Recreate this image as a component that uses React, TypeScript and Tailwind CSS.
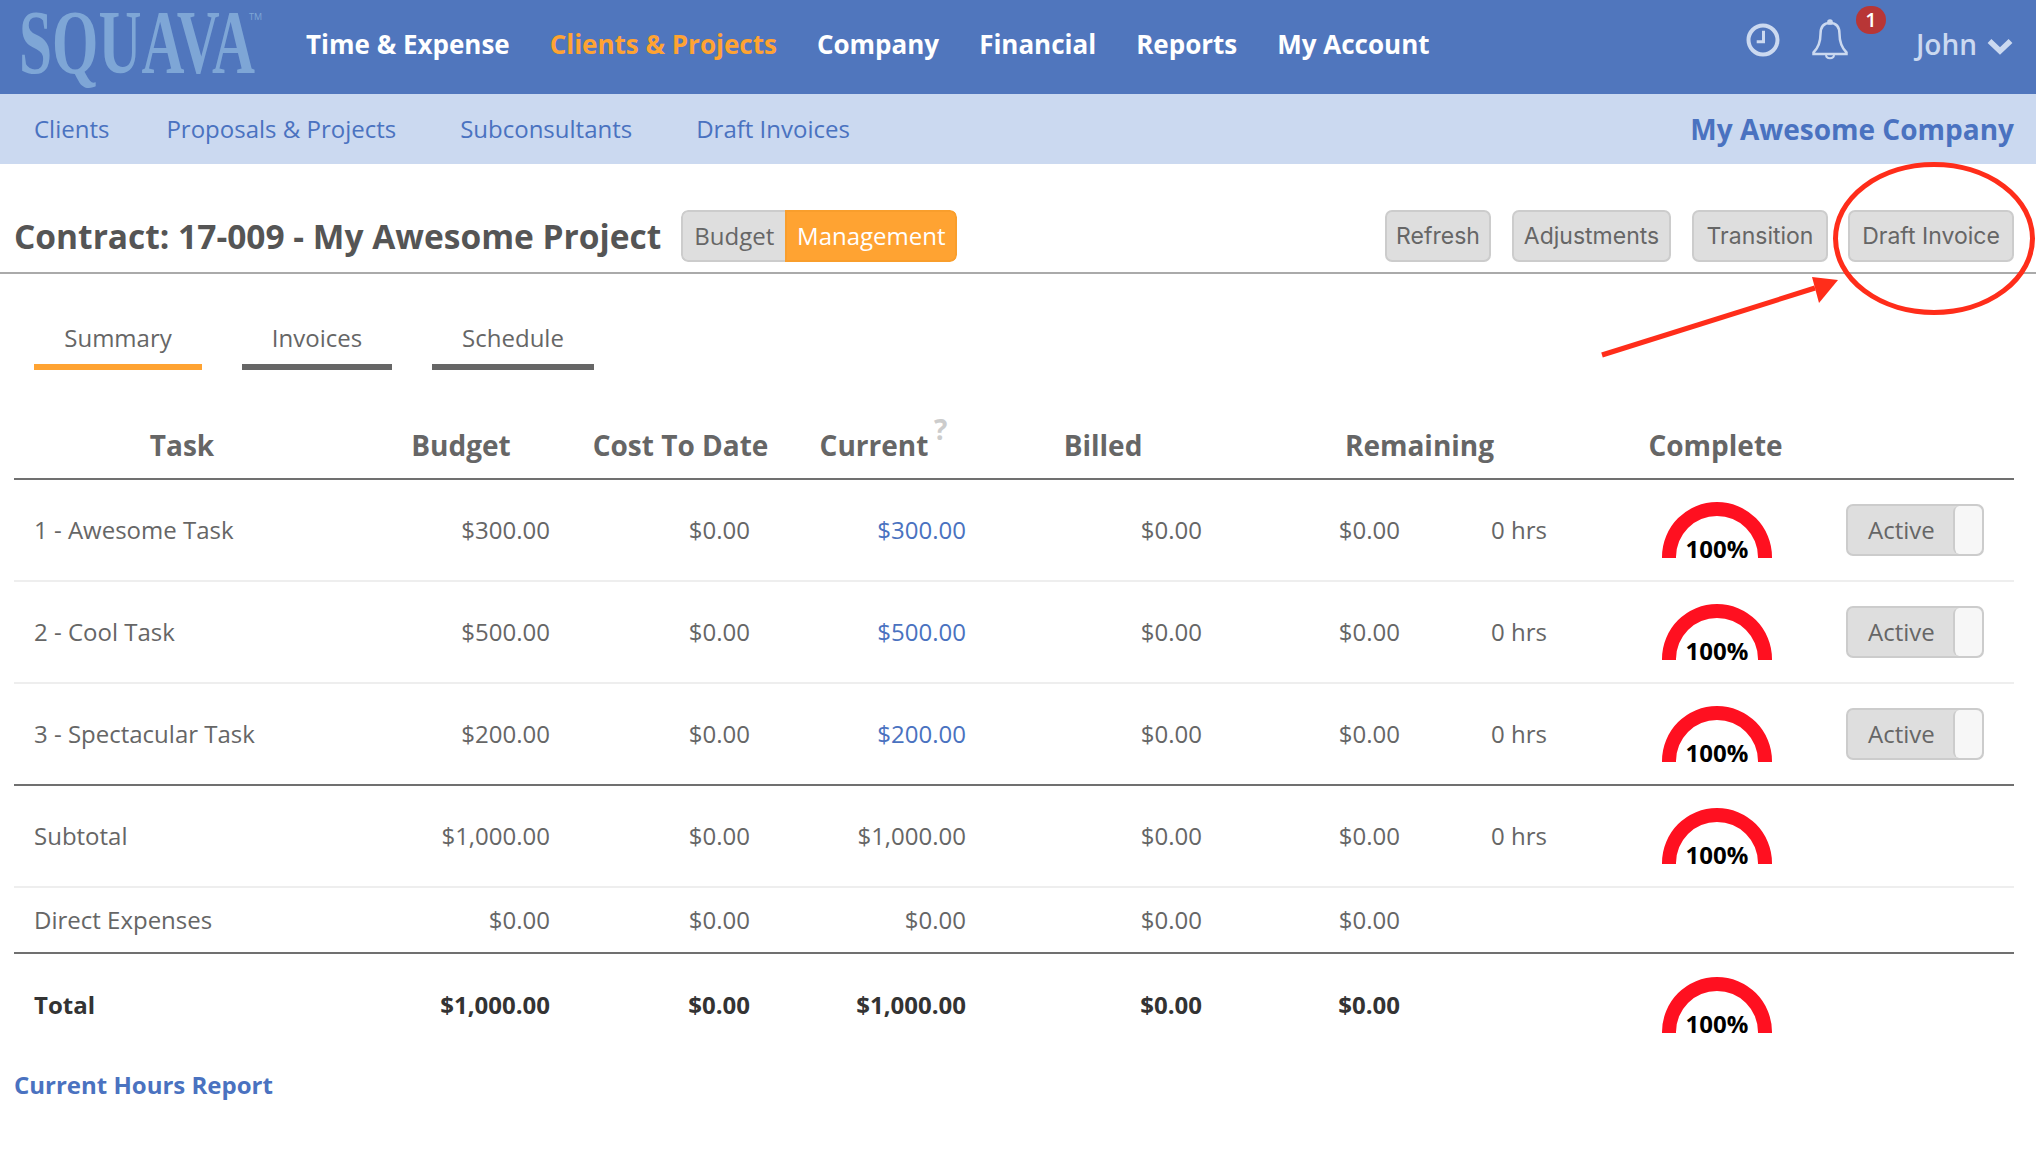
const cols = "grid grid-cols-[336px_200px_200px_216px_236px_198px_147px_55px_230px_182px]";

function Gauge() {
  return (
    <div className="relative w-[110px] h-[56px]">
      <svg width="110" height="56" viewBox="0 0 110 56" className="block">
        <path d="M0 56V55A55 55 0 0 1 110 55V56H96V55A41 41 0 0 0 14 55V56Z" fill="#ff1020" />
      </svg>
      <div className="absolute left-0 right-0 top-[31px] text-center text-[24px] leading-[32px] font-bold text-black">100%</div>
    </div>
  );
}

function Toggle() {
  return (
    <div className="flex h-[52px] w-[138px] rounded-[7px] border-2 border-[#cccccc] bg-[#dedede]">
      <div className="flex-1 pl-[20px] text-[24px] leading-[48px] text-[#666666]">Active</div>
      <div className="w-[29px] rounded-[6px] border-l-2 border-[#cccccc] bg-[#f7f7f7]" />
    </div>
  );
}

type RowProps = {
  name: string; budget: string; cost: string; current: string; billed: string; remaining: string;
  hrs?: string; gauge?: boolean; toggle?: boolean; link?: boolean; h: string; line: string; bold?: boolean;
};

function Row({ name, budget, cost, current, billed, remaining, hrs, gauge, toggle, link, h, line, bold }: RowProps) {
  const cell = "flex items-center justify-end";
  return (
    <div className={`${cols} ${h} ${line} items-stretch ${bold ? "font-bold text-[#333333]" : "font-normal text-[#666666]"} text-[24px]`}>
      <div className="flex items-center pl-[20px]">{name}</div>
      <div className={cell}>{budget}</div>
      <div className={cell}>{cost}</div>
      <div className={`${cell} ${link ? "text-[#4a72c0]" : ""}`}>{current}</div>
      <div className={cell}>{billed}</div>
      <div className={cell}>{remaining}</div>
      <div className={cell}>{hrs}</div>
      <div />
      <div className="flex items-center justify-center">{gauge ? <Gauge /> : null}</div>
      <div className="flex items-center pl-[14px]">{toggle ? <Toggle /> : null}</div>
    </div>
  );
}

function Btn({ children, w, ml }: { children: string; w: string; ml: string }) {
  return (
    <div className={`${w} ${ml} h-[52px] rounded-[7px] border-2 border-[#cccccc] bg-[#dedede] text-center font-['Inter',sans-serif] text-[23px] leading-[48px] font-normal text-[#666666]`}>
      {children}
    </div>
  );
}

function Tab({ label, w, ml, active }: { label: string; w: string; ml: string; active?: boolean }) {
  return (
    <div className={`${w} ${ml} h-[59px] border-b-[6px] ${active ? "border-[#ffa332]" : "border-[#666666]"} text-center text-[24px] leading-[54px] text-[#666666]`}>
      {label}
    </div>
  );
}

export default function App() {
  return (
    <div className="relative w-[2036px] h-[1154px] overflow-hidden bg-white font-['Open_Sans',sans-serif]">
      <header className="flex h-[94px] items-center bg-[#5076bd]">
        <svg width="287" height="94" viewBox="0 0 287 94" className="ml-0 shrink-0">
          <text x="19" y="73" textLength="236" lengthAdjust="spacingAndGlyphs" fontFamily="'Liberation Serif', serif" fontWeight="700" fontSize="90" fill="#7ea6d6">SQUAVA</text>
          <text x="249" y="20" fontFamily="'Open Sans', sans-serif" fontSize="9" fill="#7ea6d6">TM</text>
        </svg>
        <svg width="19" height="1" className="shrink-0" />
        <nav className="flex pb-[6px] text-[26px] font-bold text-white">
          <span>Time &amp; Expense</span>
          <span className="ml-[40px] text-[#ffa332]">Clients &amp; Projects</span>
          <span className="ml-[40px]">Company</span>
          <span className="ml-[40px]">Financial</span>
          <span className="ml-[40px]">Reports</span>
          <span className="ml-[40px]">My Account</span>
        </nav>
        <div className="ml-auto flex items-center text-[#cbd9f0]">
          <svg width="34" height="34" viewBox="0 0 34 34" fill="none" stroke="#cbd9f0" className="mb-[14px]">
            <circle cx="17" cy="17" r="14.5" strokeWidth="4" />
            <path d="M17.5 7.7V18.7H10.7" strokeWidth="3" />
          </svg>
          <div className="relative ml-[31px] mr-[67px] mb-[14px]">
            <svg width="38" height="42" viewBox="0 0 38 42" fill="none" stroke="#cbd9f0" strokeWidth="2.5" className="block">
              <path d="M19 4C12 4 9.5 9 9.5 15C9.5 24 7 29 2.5 33.5V35H35.5V33.5C31 29 28.5 24 28.5 15C28.5 9 26 4 19 4Z" />
              <circle cx="19" cy="3" r="1.6" fill="#cbd9f0" />
              <path d="M15 35.5C15 40.5 23 40.5 23 35.5" strokeWidth="2" />
            </svg>
            <div className="absolute left-[45px] top-[-13px] flex h-[28px] w-[30px] items-center justify-center rounded-full bg-[#b83636] text-[20px] font-semibold text-white">1</div>
          </div>
          <span className="mb-[6px] text-[28px] font-semibold">John</span>
          <svg width="26" height="20" viewBox="0 0 26 20" fill="none" stroke="#cbd9f0" strokeWidth="5.5" className="mb-[2px] ml-[10px] mr-[23px]">
            <path d="M2.5 5L13 15L23.5 5" />
          </svg>
        </div>
      </header>

      <div className="flex h-[70px] items-center bg-[#cbd9f0] text-[24px] text-[#4a72c0]">
        <span className="ml-[34px]">Clients</span>
        <span className="ml-[57px]">Proposals &amp; Projects</span>
        <span className="ml-[64px]">Subconsultants</span>
        <span className="ml-[64px]">Draft Invoices</span>
        <span className="ml-auto mr-[22px] text-[28px] font-bold">My Awesome Company</span>
      </div>

      <div className="flex h-[110px] items-center border-b-2 border-[#aaaaaa] pt-[36px] pl-[14px]">
        <h1 className="shrink-0 text-[33.5px] font-bold text-[#555555]">Contract: 17-009 - My Awesome Project</h1>
        <div className="ml-[20px] flex h-[52px] overflow-hidden rounded-[7px] text-[24px]">
          <div className="w-[104px] rounded-l-[7px] border-2 border-r-0 border-[#cccccc] bg-[#dedede] text-center leading-[48px] text-[#666666]">Budget</div>
          <div className="w-[172px] rounded-r-[7px] border-2 border-[#f99e2c] bg-[#ffa332] text-center leading-[48px] text-white">Management</div>
        </div>
        <div className="ml-auto flex pr-[22px]">
          <Btn w="w-[106px]" ml="ml-0">Refresh</Btn>
          <Btn w="w-[159px]" ml="ml-[21px]">Adjustments</Btn>
          <Btn w="w-[136px]" ml="ml-[21px]">Transition</Btn>
          <Btn w="w-[166px]" ml="ml-[20px]">Draft Invoice</Btn>
        </div>
      </div>

      <div className="flex pt-[37px] pl-[34px]">
        <Tab label="Summary" w="w-[168px]" ml="ml-0" active />
        <Tab label="Invoices" w="w-[150px]" ml="ml-[40px]" />
        <Tab label="Schedule" w="w-[162px]" ml="ml-[40px]" />
      </div>

      <div className="ml-[14px] w-[2000px] mt-[39px]">
        <div className="flex h-[71px] border-b-2 border-[#707070] text-[28px] font-bold leading-[72px] text-[#666666] items-start">
          <div className="w-[336px] text-center">Task</div>
          <div className="w-[222px] text-center">Budget</div>
          <div className="w-[217px] text-center">Cost To Date</div>
          <div className="relative w-[170px] text-center">
            Current
            <span className="absolute left-[145px] top-[6px] text-[28px] leading-[28px] font-bold text-[#cccccc]">?</span>
          </div>
          <div className="w-[288px] text-center">Billed</div>
          <div className="w-[345px] text-center">Remaining</div>
          <div className="w-[247px] text-center">Complete</div>
        </div>
        <Row name="1 - Awesome Task" budget="$300.00" cost="$0.00" current="$300.00" billed="$0.00" remaining="$0.00" hrs="0 hrs" gauge toggle link h="h-[102px]" line="border-b-2 border-[#eeeeee]" />
        <Row name="2 - Cool Task" budget="$500.00" cost="$0.00" current="$500.00" billed="$0.00" remaining="$0.00" hrs="0 hrs" gauge toggle link h="h-[102px]" line="border-b-2 border-[#eeeeee]" />
        <Row name="3 - Spectacular Task" budget="$200.00" cost="$0.00" current="$200.00" billed="$0.00" remaining="$0.00" hrs="0 hrs" gauge toggle link h="h-[102px]" line="border-b-2 border-[#707070]" />
        <Row name="Subtotal" budget="$1,000.00" cost="$0.00" current="$1,000.00" billed="$0.00" remaining="$0.00" hrs="0 hrs" gauge h="h-[102px]" line="border-b-2 border-[#eeeeee]" />
        <Row name="Direct Expenses" budget="$0.00" cost="$0.00" current="$0.00" billed="$0.00" remaining="$0.00" h="h-[66px]" line="border-b-2 border-[#707070]" />
        <Row name="Total" budget="$1,000.00" cost="$0.00" current="$1,000.00" billed="$0.00" remaining="$0.00" gauge bold h="h-[102px]" line="" />
      </div>

      <div className="ml-[14px] mt-[11px] text-[24px] font-bold text-[#4a72c0]">Current Hours Report</div>

      <svg width="2036" height="1154" viewBox="0 0 2036 1154" fill="none" className="absolute left-0 top-0 pointer-events-none">
        <ellipse cx="1934" cy="238.5" rx="98.5" ry="74" stroke="#ff2d1a" strokeWidth="5" />
        <path d="M1602 355L1815 288" stroke="#ff2d1a" strokeWidth="5" />
        <path d="M1838 280L1812 277L1819 303Z" fill="#ff2d1a" />
      </svg>
    </div>
  );
}
